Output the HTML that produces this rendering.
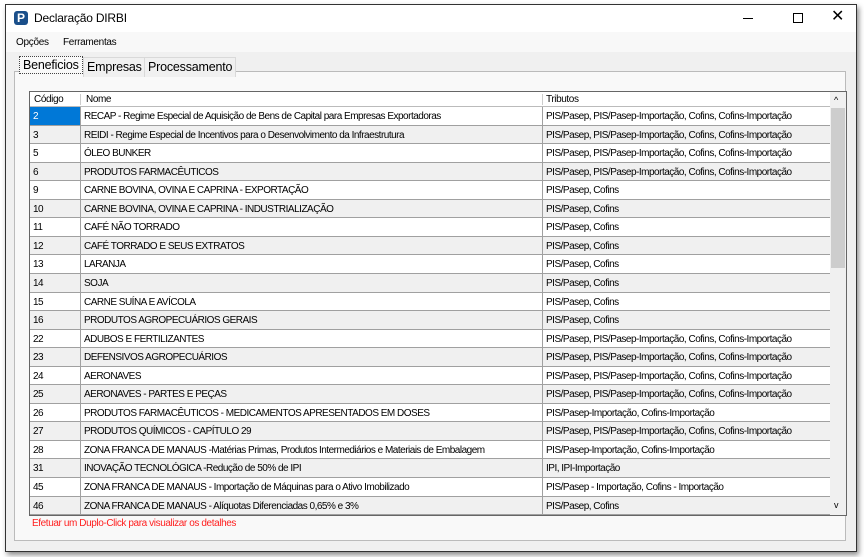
<!DOCTYPE html>
<html><head><meta charset="utf-8"><style>
*{margin:0;padding:0;box-sizing:border-box}
body{width:864px;height:557px;background:#fff;position:relative;overflow:hidden;font-family:"Liberation Sans",sans-serif;color:#000}
.win{position:absolute;left:5px;top:4px;width:852px;height:548px;border:1px solid #333;background:#f0f0f0;box-shadow:2px 3px 5px rgba(0,0,0,.45)}
.title{position:absolute;left:0;top:0;width:850px;height:27px;background:#fff}
.menu{position:absolute;left:0;top:27px;width:850px;height:20px;background:#f8f8f8;font-size:10px;letter-spacing:-0.3px}
.a{position:absolute}
.tab{position:absolute;top:52px;height:20px;font-size:12.5px;line-height:18px;padding:0 3px;background:#f0f0f0;border:1px solid #d9d9d9;border-bottom:none;letter-spacing:-0.2px}
.panel{position:absolute;left:14px;top:71px;width:832px;height:470px;border:1px solid #bbb;background:#f9f9f9}
.grid{position:absolute;left:29px;top:91px;width:818px;height:425px;border:1px solid #666;background:#fff;overflow:hidden}
.hdr{position:absolute;left:0;top:0;width:800px;height:15px;background:#fff;font-size:10px;line-height:16px;border-bottom:1px solid #bbb;letter-spacing:-0.4px}
.row{position:absolute;left:0;width:800px;height:18.6px;font-size:10px;line-height:20px;border-bottom:1px solid #a0a0a0;white-space:nowrap;letter-spacing:-0.5px}
.row.g{background:#f0f0f0}
.c1,.c2,.c3{position:absolute;top:0;height:100%;padding-left:3px}
.c1{left:0;width:50px}
.c2{left:50px;width:462px;border-left:1px solid #a0a0a0}
.c3{left:512px;width:288px;border-left:1px solid #a0a0a0}
.sb{position:absolute;left:800px;top:0;width:16px;height:423px;background:#f0f0f0}
</style></head><body>
<div class="win">
 <div class="title">
  <div class="a" style="left:8px;top:6px;width:14px;height:14px;background:#1a4f8a;border-radius:3px;color:#fff;font-weight:bold;font-size:12px;line-height:14px;text-align:center">P</div>
  <div class="a" style="left:28px;top:6px;font-size:12px;letter-spacing:-0.2px">Declaração DIRBI</div>
  <div class="a" style="left:737px;top:13px;width:10px;height:1px;background:#000"></div>
  <div class="a" style="left:787px;top:8px;width:10px;height:10px;border:1px solid #000"></div>
  <div class="a" style="left:825px;top:3px;font-size:16px;line-height:18px">✕</div>
 </div>
 <div class="menu"><span class="a" style="left:10px;top:5px">Opções</span><span class="a" style="left:57px;top:5px">Ferramentas</span></div>
</div>
<div class="panel"></div>
<div class="tab" style="left:19px;top:56px;height:18px;border:1px dotted #444;font-size:12.5px;line-height:16px;background:#f9f9f9">Beneficios</div>
<div class="tab" style="left:83px;top:57px">Empresas</div>
<div class="tab" style="left:144px;top:57px">Processamento</div>
<div class="grid">
 <div class="hdr"><span class="a" style="left:4px">Código</span><span class="a" style="left:50px;top:2px;height:11px;border-left:1px solid #ccc"></span><span class="a" style="left:56px">Nome</span><span class="a" style="left:512px;top:2px;height:11px;border-left:1px solid #ccc"></span><span class="a" style="left:516px">Tributos</span></div>
 <div id="rows"></div>
 <div class="sb"><div class="a" style="left:4px;top:3px;font-size:9px">^</div><div class="a" style="left:1px;top:16px;width:14px;height:160px;background:#cdcdcd"></div><div class="a" style="left:4px;top:408px;font-size:9px">v</div></div>
</div>
<div class="a" style="left:32px;top:518px;font-size:10px;color:#ff2020;letter-spacing:-0.4px">Efetuar um Duplo-Click para visualizar os detalhes</div>
<script>
var A="PIS/Pasep, PIS/Pasep-Importação, Cofins, Cofins-Importação",B="PIS/Pasep, Cofins";
var d=[["2","RECAP - Regime Especial de Aquisição de Bens de Capital para Empresas Exportadoras",A],["3","REIDI - Regime Especial de Incentivos para o Desenvolvimento da Infraestrutura",A],["5","ÓLEO BUNKER",A],["6","PRODUTOS FARMACÊUTICOS",A],["9","CARNE BOVINA, OVINA E CAPRINA - EXPORTAÇÃO",B],["10","CARNE BOVINA, OVINA E CAPRINA - INDUSTRIALIZAÇÃO",B],["11","CAFÉ NÃO TORRADO",B],["12","CAFÉ TORRADO E SEUS EXTRATOS",B],["13","LARANJA",B],["14","SOJA",B],["15","CARNE SUÍNA E AVÍCOLA",B],["16","PRODUTOS AGROPECUÁRIOS GERAIS",B],["22","ADUBOS E FERTILIZANTES",A],["23","DEFENSIVOS AGROPECUÁRIOS",A],["24","AERONAVES",A],["25","AERONAVES - PARTES E PEÇAS",A],["26","PRODUTOS FARMACÊUTICOS - MEDICAMENTOS APRESENTADOS EM DOSES","PIS/Pasep-Importação, Cofins-Importação"],["27","PRODUTOS QUÍMICOS - CAPÍTULO 29",A],["28","ZONA FRANCA DE MANAUS -Matérias Primas, Produtos Intermediários e Materiais de Embalagem","PIS/Pasep-Importação, Cofins-Importação"],["31","INOVAÇÃO TECNOLÓGICA -Redução de 50% de IPI","IPI, IPI-Importação"],["45","ZONA FRANCA DE MANAUS - Importação de Máquinas para o Ativo Imobilizado","PIS/Pasep - Importação, Cofins - Importação"],["46","ZONA FRANCA DE MANAUS -  Alíquotas Diferenciadas 0,65% e 3%",B]];
var h="";d.forEach(function(r,i){var t=15+i*18.55;h+='<div class="row'+(i%2?' g':'')+'" style="top:'+t+'px"><div class="c1"'+(i==0?' style="background:#0078d7;color:#fff"':'')+'>'+r[0]+'</div><div class="c2">'+r[1]+'</div><div class="c3">'+r[2]+'</div></div>';});
document.getElementById("rows").innerHTML=h;
</script>
</body></html>
